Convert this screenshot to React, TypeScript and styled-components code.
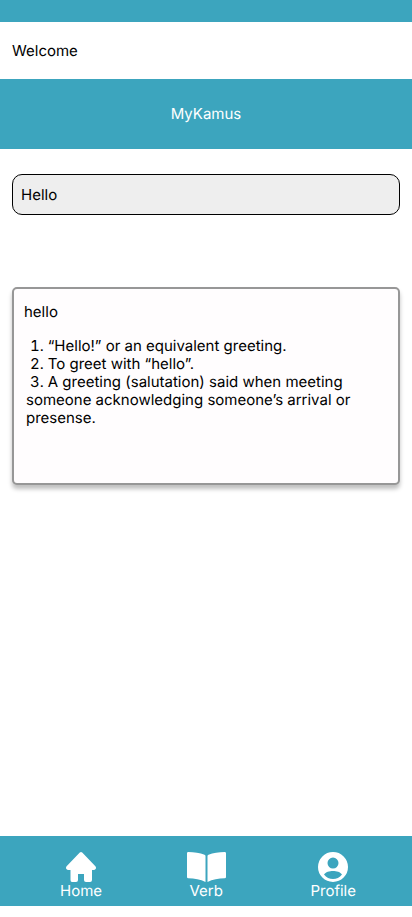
import React, { useState } from "react";
import styled, { createGlobalStyle } from "styled-components";

const teal = "#3ca5be";

const GlobalStyle = createGlobalStyle`
  *, *::before, *::after { box-sizing: border-box; }
  body {
    margin: 0;
    background: #fff;
    color: #000;
    font: 400 15px/18px Inter, "Liberation Sans", sans-serif;
    text-rendering: geometricPrecision;
    -webkit-font-smoothing: antialiased;
  }
`;

const Page = styled.div`
  display: flex;
  flex-direction: column;
  min-height: 100vh;
  padding-bottom: 11px;
`;

const StatusBar = styled.div`
  height: 22px;
  background: ${teal};
`;

const Greeting = styled.p`
  margin: 0;
  padding: 20px 12px 19px;
`;

const Banner = styled.header`
  display: flex;
  align-items: center;
  justify-content: center;
  height: 70px;
  background: ${teal};
`;

const Title = styled.h1`
  margin: 0;
  color: #fff;
  font-size: 15px;
  font-weight: inherit;
`;

const Content = styled.main`
  flex: 1;
  display: flex;
  flex-direction: column;
  gap: 72px;
  padding: 25px 12px;
`;

const SearchInput = styled.input`
  width: 100%;
  height: 41px;
  padding: 0 8px;
  border: 1px solid #000;
  border-radius: 10px;
  background: #eee;
  color: #000;
  font: inherit;
  text-rendering: inherit;
  outline: none;
`;

const Card = styled.article`
  min-height: 198px;
  padding: 14px 10px;
  border: 2px solid #979797;
  border-radius: 5px;
  background: #fffdfe;
  box-shadow: 0 4px 4px rgba(0, 0, 0, 0.25);
`;

const Word = styled.h2`
  margin: 0 0 16px;
  font-size: 15px;
  font-weight: inherit;
`;

const Definitions = styled.ol`
  margin: 0;
  padding: 0 2px;
  list-style: none;
`;

const Index = styled.span`
  padding: 0 4px;
  font-variant-numeric: tabular-nums;
`;

const TabBar = styled.nav`
  display: flex;
  align-items: flex-start;
  justify-content: space-between;
  height: 70px;
  padding: 16px 56px 0 60px;
  background: ${teal};
`;

const Tab = styled.a`
  display: flex;
  flex-direction: column;
  align-items: center;
  color: #fff;
  text-decoration: none;

  svg {
    display: block;
    height: 30px;
    fill: currentColor;
  }
`;

const HomeIcon = () => (
  <svg width="30" height="30" viewBox="0 0 30 30" aria-hidden="true">
    <path d="M13.800 .5Q15-.5 16.200 .5L29.400 14.300Q30.500 15.600 29.600 17Q29 18 27.600 18H26V28Q26 30 24 30H20Q18 30 18 28V22H12V28Q12 30 10 30H6Q4.500 30 4.500 28V18H2.400Q1 18 .4 17Q-.5 15.600 .6 14.300Z" />
  </svg>
);

const BookIcon = () => (
  <svg width="39" height="30" viewBox="0 0 39 30" aria-hidden="true">
    <path d="M18.500 4V30C13.500 27.400 7.500 26.600 1.300 26.300Q0 26.300 0 25V1.300Q0 0 1.300 0C7 .2 13 .8 17.500 2.700Q18.500 3.100 18.500 4ZM20.500 4V30C25.500 27.400 31.500 26.600 37.700 26.300Q39 26.300 39 25V1.300Q39 0 37.700 0C32 .2 26 .8 21.500 2.700Q20.500 3.100 20.500 4Z" />
  </svg>
);

const ProfileIcon = () => (
  <svg width="30" height="30" viewBox="0 0 30 30" aria-hidden="true">
    <path
      fillRule="evenodd"
      d="M15 0a15 15 0 1 1 0 30a15 15 0 0 1 0-30ZM15 5.600a5.500 5.500 0 1 0 0 11a5.500 5.500 0 0 0 0-11ZM6 22.500C10.500 28.600 19.500 28.600 24 22.500C22.500 20 18.500 18.900 15 18.900S7.500 20 6 22.500Z"
    />
  </svg>
);

const tabs = [
  { label: "Home", Icon: HomeIcon },
  { label: "Verb", Icon: BookIcon },
  { label: "Profile", Icon: ProfileIcon },
];

const definitions = [
  "“Hello!” or an equivalent greeting.",
  "To greet with “hello”.",
  "A greeting (salutation) said when meeting someone acknowledging someone’s arrival or presense.",
];

export default function App() {
  const [query, setQuery] = useState("Hello");

  return (
    <>
      <GlobalStyle />
      <Page>
        <StatusBar />
        <Greeting>Welcome</Greeting>
        <Banner>
          <Title>MyKamus</Title>
        </Banner>
        <Content>
          <SearchInput
            type="text"
            aria-label="Search word"
            value={query}
            onChange={(event) => setQuery(event.target.value)}
          />
          <Card>
            <Word>hello</Word>
            <Definitions>
              {definitions.map((text, i) => (
                <li key={text}>
                  <Index>{i + 1}.</Index>
                  {text}
                </li>
              ))}
            </Definitions>
          </Card>
        </Content>
        <TabBar>
          {tabs.map(({ label, Icon }) => (
            <Tab key={label} href={`#${label.toLowerCase()}`}>
              <Icon />
              {label}
            </Tab>
          ))}
        </TabBar>
      </Page>
    </>
  );
}
